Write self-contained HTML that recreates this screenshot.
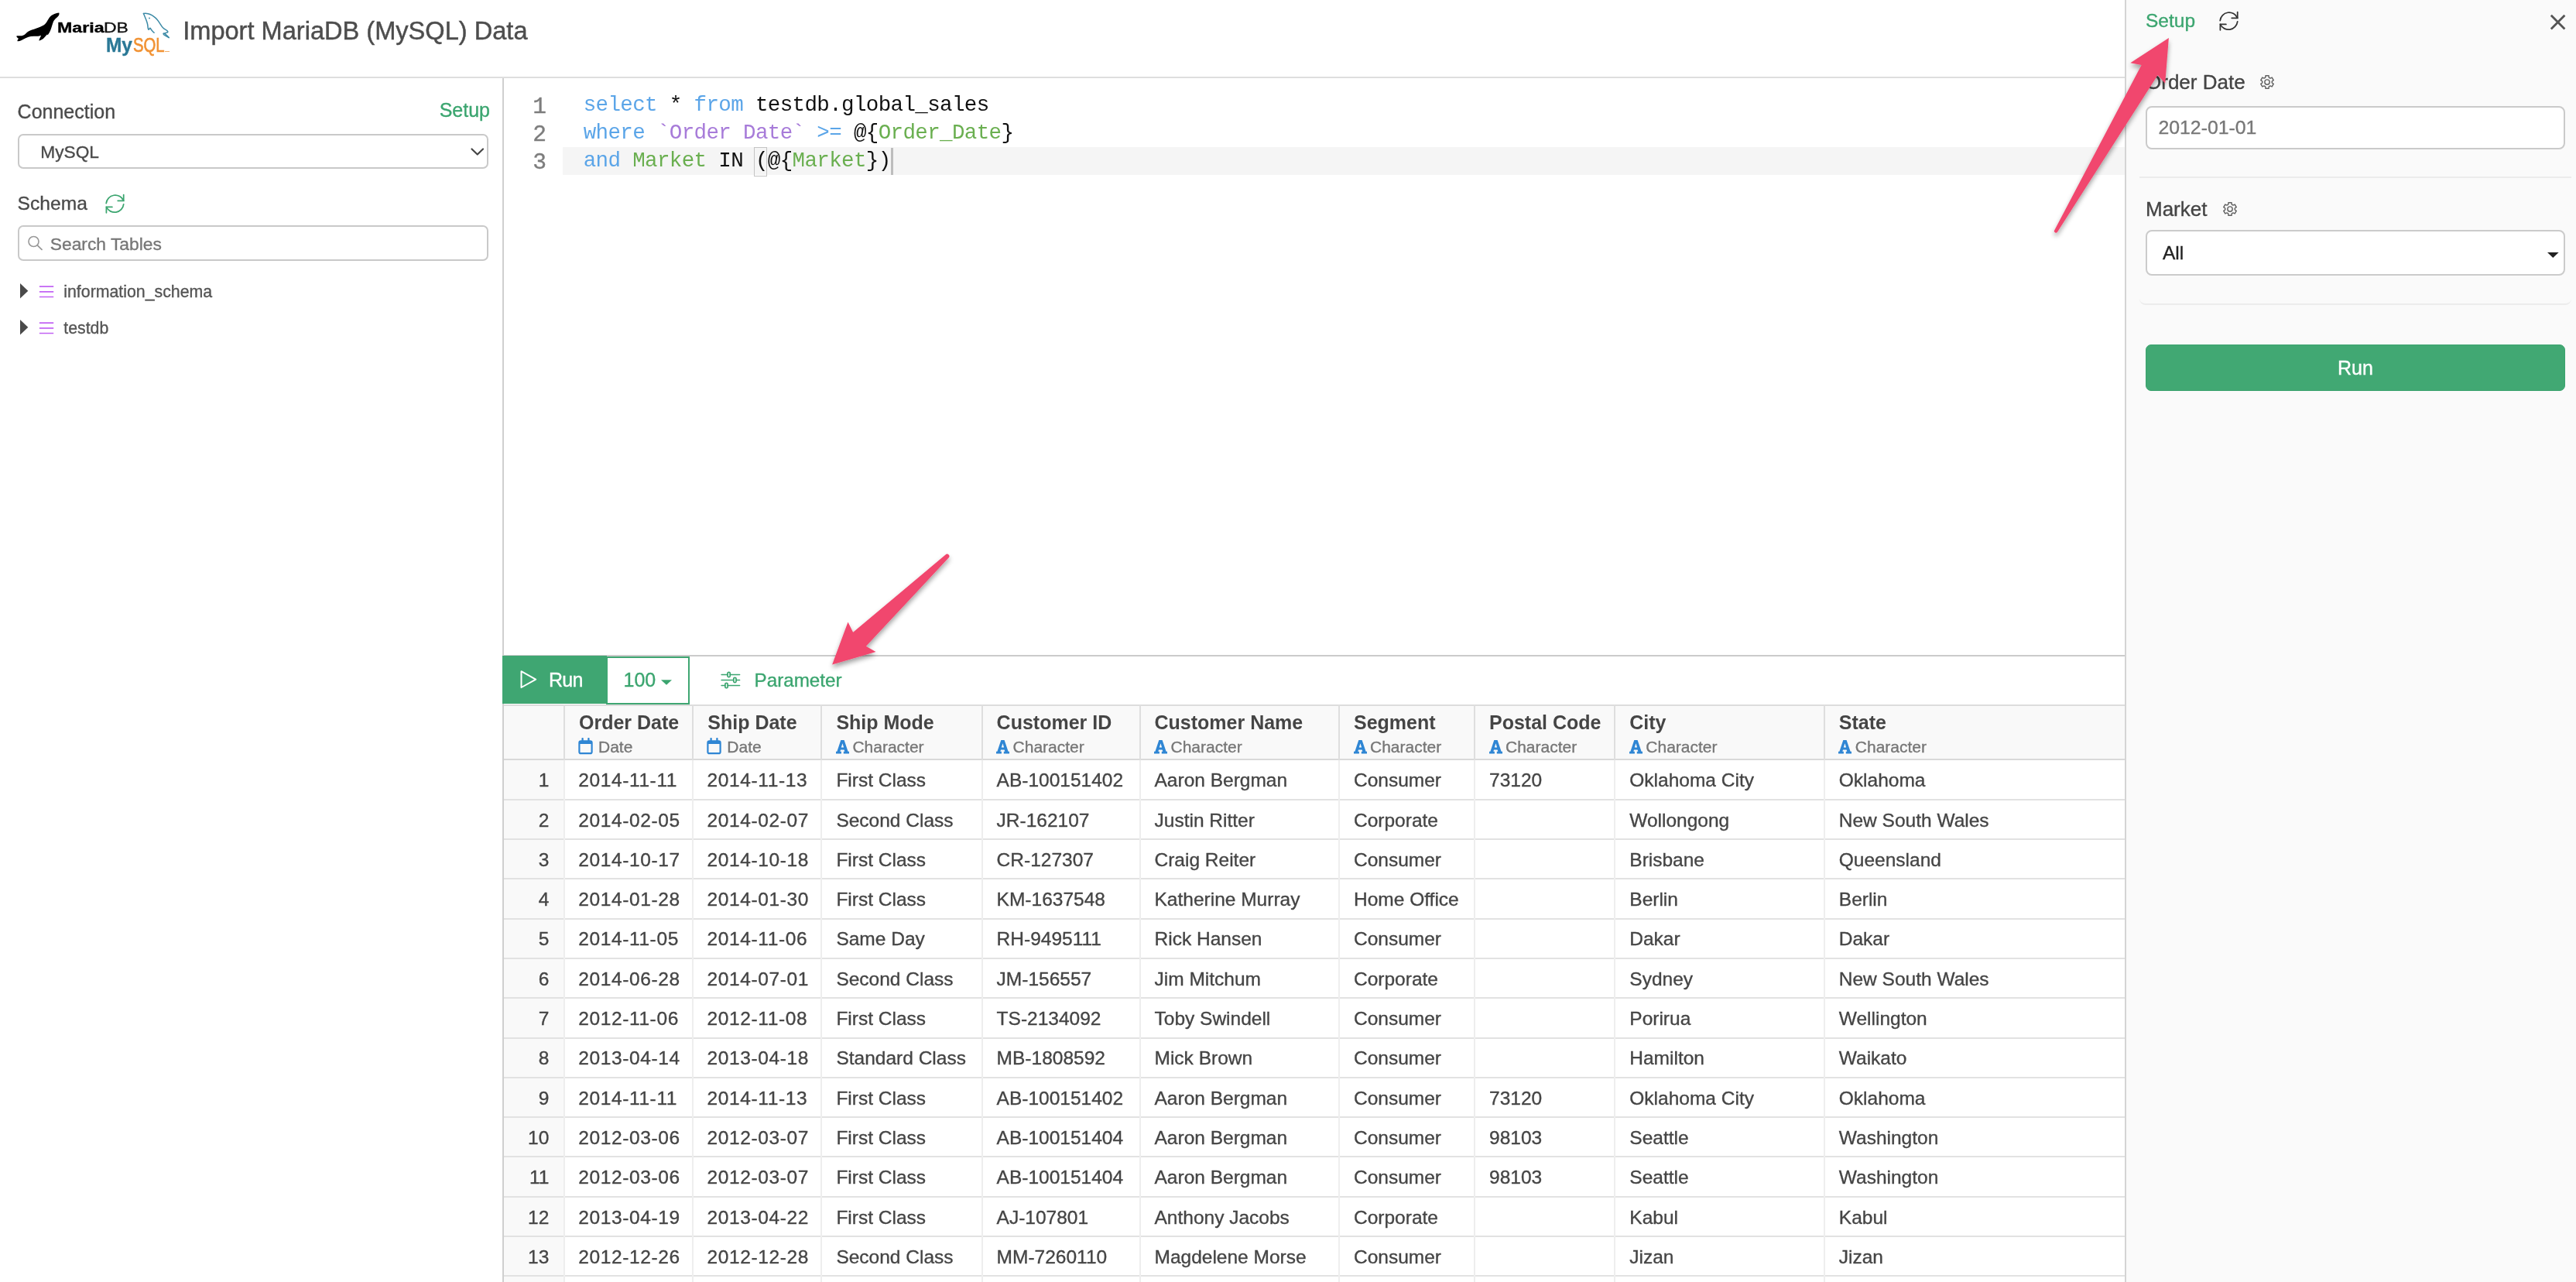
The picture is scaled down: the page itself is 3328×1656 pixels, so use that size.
<!DOCTYPE html>
<html><head><meta charset="utf-8"><title>Import MariaDB (MySQL) Data</title>
<style>
html,body{margin:0;padding:0;}
body{width:3328px;height:1656px;overflow:hidden;background:#fff;position:relative;font-family:"Liberation Sans",sans-serif;}
.t{position:absolute;white-space:pre;-webkit-text-stroke:0.35px currentColor;}
.abs{position:absolute;}
.box{position:absolute;box-sizing:border-box;}
</style></head><body><div class="abs" style="left:0;top:0;width:3328px;height:1656px;will-change:transform">

<div class="abs" style="left:0;top:99px;width:2745px;height:2px;background:#dedede"></div>
<div class="abs" style="left:649px;top:101px;width:2px;height:1555px;background:#cfcfcf"></div>
<svg class="abs" style="left:0;top:0" width="240" height="90" viewBox="0 0 240 90"><path d="M76.43 16.96 Q76.25 16.43 76.25 16.43 Q76.25 16.43 74.38 16.79 Q72.50 17.14 70.27 17.99 Q68.04 18.84 66.47 19.96 Q64.91 21.07 63.79 22.63 Q62.68 24.20 61.56 26.21 Q60.45 28.21 59.33 29.78 Q58.21 31.34 56.43 32.46 Q54.64 33.57 51.96 34.69 Q49.29 35.80 46.61 36.70 Q43.93 37.59 41.25 38.48 Q38.57 39.38 36.79 40.49 Q35.00 41.61 33.21 43.39 Q31.43 45.18 29.64 45.85 Q27.86 46.52 25.62 46.29 Q23.39 46.07 22.05 46.29 Q20.71 46.52 21.61 47.63 Q22.50 48.75 23.39 49.20 Q24.29 49.64 22.95 51.43 Q21.61 53.21 23.39 53.21 Q25.18 53.21 27.86 51.88 Q30.54 50.54 33.66 48.97 Q36.79 47.41 39.91 46.96 Q43.04 46.52 45.71 46.74 Q48.39 46.96 50.62 46.52 Q52.86 46.07 53.30 45.40 Q53.75 44.73 51.74 48.75 Q49.73 52.77 50.85 52.54 Q51.96 52.32 54.20 50.98 Q56.43 49.64 58.21 47.41 Q60.00 45.18 60.67 44.73 Q61.34 44.29 61.47 44.96 Q61.61 45.62 62.59 44.06 Q63.57 42.50 64.46 40.71 Q65.36 38.93 66.25 36.25 Q67.14 33.57 67.81 31.34 Q68.48 29.11 69.15 27.54 Q69.82 25.98 71.16 24.64 Q72.50 23.30 73.62 22.41 Q74.73 21.52 75.49 20.40 Q76.25 19.29 76.43 18.39 Q76.61 17.50 76.43 16.96 Z" fill="#000"/><g fill="none" stroke="#3c8aa6" stroke-width="1.5" stroke-linecap="round" stroke-linejoin="round"><path d="M185.45 17.50 Q188.57 17.05 191.25 17.72 Q193.93 18.39 196.16 19.73 Q198.39 21.07 200.62 22.86 Q202.86 24.64 204.64 27.32 Q206.43 30.00 207.77 32.23 Q209.11 34.46 210.45 35.80 Q211.79 37.14 214.02 38.48 Q216.25 39.82 216.70 40.71 Q217.14 41.61 215.80 41.96 Q214.46 42.32 213.48 42.77 Q212.50 43.21 213.93 44.29 Q215.36 45.36 216.79 46.96 L218.21 48.57"/><path d="M185.45 17.50 Q187.68 22.86 188.57 25.09 Q189.46 27.32 190.13 29.55 Q190.80 31.79 190.94 34.02 Q191.07 36.25 191.61 37.68 Q192.14 39.11 192.95 37.23 Q193.75 35.36 194.51 36.79 Q195.27 38.21 196.38 39.46 Q197.50 40.71 198.30 41.52 L199.11 42.32"/><path d="M218.21 48.57 Q214.46 46.52 212.90 45.62 Q211.34 44.73 211.12 43.84 Q210.89 42.95 211.70 43.08 L212.50 43.21"/></g><circle cx="193" cy="23.5" r="0.9" fill="#3c8aa6"/></svg><div class="t" style="left:73.6px;top:25.8px;font-size:18px;line-height:20px;color:#000;font-weight:bold;transform-origin:0 0;transform:scaleX(1.29)">Maria</div><div class="t" style="left:134.2px;top:25.8px;font-size:18px;line-height:20px;color:#111;transform-origin:0 0;transform:scaleX(1.27)">DB</div><div class="t" style="left:137.3px;top:43.6px;font-size:26px;line-height:28px;color:#2a7896;font-weight:bold;transform-origin:0 0;transform:scaleX(0.94)">My</div><div class="t" style="left:172.3px;top:43.6px;font-size:26px;line-height:28px;color:#f19233;-webkit-text-stroke:0.7px #f19233;transform-origin:0 0;transform:scaleX(0.78)">SQL</div><div class="abs" style="left:212.5px;top:65.5px;width:6px;height:1.5px;background:#f4b06a"></div>
<div class="t" style="left:236.20px;top:24.40px;font-size:32.60px;line-height:32.60px;color:#4d4d4d;font-weight:normal;-webkit-text-stroke:0.45px #4d4d4d;">Import MariaDB (MySQL) Data</div>
<div class="t" style="left:22.60px;top:132.04px;font-size:25.00px;line-height:25.00px;color:#4a4a4a;font-weight:normal;">Connection</div>
<div class="t" style="right:2695.00px;top:130.24px;font-size:25.00px;line-height:25.00px;color:#3ba56f;font-weight:normal;">Setup</div>
<div class="box" style="left:23px;top:173px;width:608px;height:45px;border:2px solid #c9c9c9;border-radius:7px;background:#fff"></div>
<div class="t" style="left:52.30px;top:185.38px;font-size:22.70px;line-height:22.70px;color:#4a4a4a;font-weight:normal;">MySQL</div>
<svg class="abs" style="left:606px;top:188px" width="22" height="16" viewBox="0 0 22 16"><path d="M3.5 4.5 L10.8 11.5 L18 4.5" fill="none" stroke="#444" stroke-width="2.2" stroke-linecap="round" stroke-linejoin="round"/></svg>
<div class="t" style="left:22.60px;top:251.18px;font-size:24.60px;line-height:24.60px;color:#4a4a4a;font-weight:normal;">Schema</div>
<svg class="abs" style="left:135.00px;top:250.00px" width="28" height="28" viewBox="0 0 28 28"><g fill="none" stroke="#3ba56f" stroke-width="1.75" stroke-linecap="round" stroke-linejoin="miter"><path d="M2.2 12.7 A11.7 11.7 0 0 1 24.6 9.2"/><path d="M24.7 1.6 V9.3 H17.2"/><path d="M24.7 13.9 A11.7 11.7 0 0 1 2.5 17.5"/><path d="M2.4 24.8 V17.4 H9.9"/></g></svg>
<div class="box" style="left:23px;top:291px;width:608px;height:46px;border:2px solid #c9c9c9;border-radius:7px;background:#fff"></div>
<svg class="abs" style="left:34px;top:303px" width="24" height="22" viewBox="0 0 24 22"><circle cx="9.5" cy="9" r="6.5" fill="none" stroke="#999" stroke-width="1.6"/><path d="M14.3 13.8 L20 19.3" stroke="#999" stroke-width="1.8" stroke-linecap="round"/></svg>
<div class="t" style="left:64.80px;top:303.60px;font-size:22.80px;line-height:22.80px;color:#777;font-weight:normal;">Search Tables</div>
<svg class="abs" style="left:25px;top:365.3px" width="14" height="22" viewBox="0 0 14 22"><path d="M1 1 L11.3 10.8 L1 20.6 Z" fill="#4a4a4a"/></svg>
<svg class="abs" style="left:50px;top:366.3px" width="21" height="22" viewBox="0 0 21 22"><path d="M0.9 4.1 H19.2 M0.9 10.9 H19.2 M0.9 17.5 H19.2" stroke="#c264f4" stroke-width="1.6" fill="none"/></svg>
<div class="t" style="left:82.30px;top:366.77px;font-size:21.30px;line-height:21.30px;color:#555;font-weight:normal;">information_schema</div>
<svg class="abs" style="left:25px;top:412.3px" width="14" height="22" viewBox="0 0 14 22"><path d="M1 1 L11.3 10.8 L1 20.6 Z" fill="#4a4a4a"/></svg>
<svg class="abs" style="left:50px;top:413.3px" width="21" height="22" viewBox="0 0 21 22"><path d="M0.9 4.1 H19.2 M0.9 10.9 H19.2 M0.9 17.5 H19.2" stroke="#c264f4" stroke-width="1.6" fill="none"/></svg>
<div class="t" style="left:82.30px;top:413.77px;font-size:21.30px;line-height:21.30px;color:#555;font-weight:normal;">testdb</div>
<div class="abs" style="left:727px;top:190px;width:2018px;height:36px;background:#f5f5f5"></div>
<div class="t" style="left:753.70px;top:117.57px;font-family:'Liberation Mono', monospace;font-size:27.5px;letter-spacing:-0.63px;line-height:36px;-webkit-text-stroke:0;color:#000"><span style="color:#5ba5e8">select</span><span style="color:#111"> * </span><span style="color:#5ba5e8">from</span><span style="color:#111"> testdb.global_sales</span></div>
<div class="t" style="left:753.70px;top:153.57px;font-family:'Liberation Mono', monospace;font-size:27.5px;letter-spacing:-0.63px;line-height:36px;-webkit-text-stroke:0;color:#000"><span style="color:#5ba5e8">where</span><span style="color:#111"> </span><span style="color:#a77bd9">`Order Date`</span><span style="color:#111"> </span><span style="color:#5ba5e8">&gt;=</span><span style="color:#111"> @{</span><span style="color:#6aaf50">Order_Date</span><span style="color:#111">}</span></div>
<div class="t" style="left:753.70px;top:189.57px;font-family:'Liberation Mono', monospace;font-size:27.5px;letter-spacing:-0.63px;line-height:36px;-webkit-text-stroke:0;color:#000"><span style="color:#5ba5e8">and</span><span style="color:#111"> </span><span style="color:#6aaf50">Market</span><span style="color:#111"> IN (@{</span><span style="color:#6aaf50">Market</span><span style="color:#111">})</span></div>
<div class="t" style="left:688.2px;top:119.91px;font-family:'Liberation Mono', monospace;font-size:29.6px;line-height:36px;color:#7d7d7d">1</div>
<div class="t" style="left:688.2px;top:155.91px;font-family:'Liberation Mono', monospace;font-size:29.6px;line-height:36px;color:#7d7d7d">2</div>
<div class="t" style="left:688.2px;top:191.91px;font-family:'Liberation Mono', monospace;font-size:29.6px;line-height:36px;color:#7d7d7d">3</div>
<div class="box" style="left:974px;top:189.5px;width:16.5px;height:38.5px;border:1.5px solid #c4c4c4"></div>
<div class="abs" style="left:1151px;top:191px;width:3px;height:35px;background:#bdbdbd"></div>
<div class="abs" style="left:651px;top:846px;width:2094px;height:2px;background:#cbcbcb"></div>
<div class="abs" style="left:649px;top:847px;width:135px;height:62px;background:#3fa672"></div>
<svg class="abs" style="left:668px;top:862px" width="30" height="32" viewBox="0 0 30 32"><path d="M5.5 5.2 L24.2 15.6 L5.5 26 Z" fill="none" stroke="#fff" stroke-width="2" stroke-linejoin="round"/></svg>
<div class="t" style="left:709.00px;top:866.24px;font-size:25.00px;line-height:25.00px;color:#fff;font-weight:normal;letter-spacing:-0.7px;">Run</div>
<div class="box" style="left:783px;top:848px;width:108px;height:62px;border:2px solid #3fa672;background:#fff"></div>
<div class="t" style="left:805.50px;top:866.24px;font-size:25.00px;line-height:25.00px;color:#3ba56f;font-weight:normal;">100</div>
<svg class="abs" style="left:853px;top:877px" width="16" height="9" viewBox="0 0 16 9"><path d="M1 1.3 L15 1.3 L8 7.8 Z" fill="#3ba56f"/></svg>
<svg class="abs" style="left:930px;top:866px" width="28" height="26" viewBox="0 0 28 26"><g fill="none" stroke="#3ba56f" stroke-width="1.55" stroke-linecap="round"><path d="M2.1 5.5 H9.9 M13.3 5.5 H25.6 M2.1 12.4 H17.7 M21.1 12.4 H25.6 M2.1 19.5 H6.8 M10.2 19.5 H25.6"/><g stroke-width="1.7"><rect x="9.95" y="2.3" width="3.3" height="6.3" rx="1.5"/><rect x="17.75" y="9.3" width="3.3" height="6.3" rx="1.5"/><rect x="6.85" y="16.4" width="3.3" height="6.3" rx="1.5"/></g></g></svg>
<div class="t" style="left:974.60px;top:866.91px;font-size:24.20px;line-height:24.20px;color:#3ba56f;font-weight:normal;">Parameter</div>
<div class="abs" style="left:651px;top:910px;width:2094px;height:72px;background:#f9f9f9"></div>
<div class="abs" style="left:651px;top:982px;width:78px;height:674px;background:#f9f9f9"></div>
<div class="abs" style="left:651px;top:910px;width:2094px;height:2px;background:#dcdcdc"></div>
<div class="abs" style="left:651px;top:980px;width:2094px;height:2px;background:#d9d9d9"></div>
<div class="abs" style="left:651px;top:1032px;width:2094px;height:2px;background:#e2e2e2"></div>
<div class="abs" style="left:651px;top:1083px;width:2094px;height:2px;background:#e2e2e2"></div>
<div class="abs" style="left:651px;top:1134px;width:2094px;height:2px;background:#e2e2e2"></div>
<div class="abs" style="left:651px;top:1186px;width:2094px;height:2px;background:#e2e2e2"></div>
<div class="abs" style="left:651px;top:1237px;width:2094px;height:2px;background:#e2e2e2"></div>
<div class="abs" style="left:651px;top:1288px;width:2094px;height:2px;background:#e2e2e2"></div>
<div class="abs" style="left:651px;top:1340px;width:2094px;height:2px;background:#e2e2e2"></div>
<div class="abs" style="left:651px;top:1391px;width:2094px;height:2px;background:#e2e2e2"></div>
<div class="abs" style="left:651px;top:1442px;width:2094px;height:2px;background:#e2e2e2"></div>
<div class="abs" style="left:651px;top:1493px;width:2094px;height:2px;background:#e2e2e2"></div>
<div class="abs" style="left:651px;top:1545px;width:2094px;height:2px;background:#e2e2e2"></div>
<div class="abs" style="left:651px;top:1596px;width:2094px;height:2px;background:#e2e2e2"></div>
<div class="abs" style="left:651px;top:1647px;width:2094px;height:2px;background:#e2e2e2"></div>
<div class="abs" style="left:728px;top:910px;width:2px;height:72px;background:#dedede"></div>
<div class="abs" style="left:728px;top:982px;width:2px;height:674px;background:#eeeeee"></div>
<div class="abs" style="left:894px;top:910px;width:2px;height:72px;background:#dedede"></div>
<div class="abs" style="left:894px;top:982px;width:2px;height:674px;background:#eeeeee"></div>
<div class="abs" style="left:1060px;top:910px;width:2px;height:72px;background:#dedede"></div>
<div class="abs" style="left:1060px;top:982px;width:2px;height:674px;background:#eeeeee"></div>
<div class="abs" style="left:1268px;top:910px;width:2px;height:72px;background:#dedede"></div>
<div class="abs" style="left:1268px;top:982px;width:2px;height:674px;background:#eeeeee"></div>
<div class="abs" style="left:1472px;top:910px;width:2px;height:72px;background:#dedede"></div>
<div class="abs" style="left:1472px;top:982px;width:2px;height:674px;background:#eeeeee"></div>
<div class="abs" style="left:1729px;top:910px;width:2px;height:72px;background:#dedede"></div>
<div class="abs" style="left:1729px;top:982px;width:2px;height:674px;background:#eeeeee"></div>
<div class="abs" style="left:1904px;top:910px;width:2px;height:72px;background:#dedede"></div>
<div class="abs" style="left:1904px;top:982px;width:2px;height:674px;background:#eeeeee"></div>
<div class="abs" style="left:2085px;top:910px;width:2px;height:72px;background:#dedede"></div>
<div class="abs" style="left:2085px;top:982px;width:2px;height:674px;background:#eeeeee"></div>
<div class="abs" style="left:2356px;top:910px;width:2px;height:72px;background:#dedede"></div>
<div class="abs" style="left:2356px;top:982px;width:2px;height:674px;background:#eeeeee"></div>
<div class="t" style="left:748.00px;top:921.44px;font-size:25.00px;line-height:25.00px;color:#454545;font-weight:bold;-webkit-text-stroke:0;">Order Date</div>
<svg class="abs" style="left:746.5px;top:952.8px" width="21" height="23" viewBox="0 0 21 23"><rect x="1.4" y="4.4" width="16.2" height="15.8" rx="2" fill="none" stroke="#2f86d4" stroke-width="2.2"/><rect x="1.4" y="4.4" width="16.2" height="3.6" fill="#2f86d4"/><path d="M5.6 1.1 V5.5 M13.4 1.1 V5.5" stroke="#2f86d4" stroke-width="2.3" stroke-linecap="round"/></svg>
<div class="t" style="left:773.00px;top:954.22px;font-size:21.00px;line-height:21.00px;color:#777;font-weight:normal;">Date</div>
<div class="t" style="left:914.30px;top:921.44px;font-size:25.00px;line-height:25.00px;color:#454545;font-weight:bold;-webkit-text-stroke:0;">Ship Date</div>
<svg class="abs" style="left:912.8px;top:952.8px" width="21" height="23" viewBox="0 0 21 23"><rect x="1.4" y="4.4" width="16.2" height="15.8" rx="2" fill="none" stroke="#2f86d4" stroke-width="2.2"/><rect x="1.4" y="4.4" width="16.2" height="3.6" fill="#2f86d4"/><path d="M5.6 1.1 V5.5 M13.4 1.1 V5.5" stroke="#2f86d4" stroke-width="2.3" stroke-linecap="round"/></svg>
<div class="t" style="left:939.30px;top:954.22px;font-size:21.00px;line-height:21.00px;color:#777;font-weight:normal;">Date</div>
<div class="t" style="left:1080.40px;top:921.44px;font-size:25.00px;line-height:25.00px;color:#454545;font-weight:bold;-webkit-text-stroke:0;">Ship Mode</div>
<svg class="abs" style="left:1078.9px;top:955.5px" width="19" height="19" viewBox="0 0 19 19"><path d="M7.3 0 L11.6 0 L16.6 14.7 L18 14.7 L18 17.6 L10.8 17.6 L10.8 14.7 L12.3 14.7 L11.6 12.4 L7.0 12.4 L6.3 14.7 L7.9 14.7 L7.9 17.6 L1 17.6 L1 14.7 L2.4 14.7 Z M9.45 4.3 L7.8 9.4 L11.1 9.4 Z" fill="#2f86d4" fill-rule="evenodd"/></svg>
<div class="t" style="left:1101.40px;top:954.22px;font-size:21.00px;line-height:21.00px;color:#777;font-weight:normal;">Character</div>
<div class="t" style="left:1287.60px;top:921.44px;font-size:25.00px;line-height:25.00px;color:#454545;font-weight:bold;-webkit-text-stroke:0;">Customer ID</div>
<svg class="abs" style="left:1286.1px;top:955.5px" width="19" height="19" viewBox="0 0 19 19"><path d="M7.3 0 L11.6 0 L16.6 14.7 L18 14.7 L18 17.6 L10.8 17.6 L10.8 14.7 L12.3 14.7 L11.6 12.4 L7.0 12.4 L6.3 14.7 L7.9 14.7 L7.9 17.6 L1 17.6 L1 14.7 L2.4 14.7 Z M9.45 4.3 L7.8 9.4 L11.1 9.4 Z" fill="#2f86d4" fill-rule="evenodd"/></svg>
<div class="t" style="left:1308.60px;top:954.22px;font-size:21.00px;line-height:21.00px;color:#777;font-weight:normal;">Character</div>
<div class="t" style="left:1491.50px;top:921.44px;font-size:25.00px;line-height:25.00px;color:#454545;font-weight:bold;-webkit-text-stroke:0;">Customer Name</div>
<svg class="abs" style="left:1490.0px;top:955.5px" width="19" height="19" viewBox="0 0 19 19"><path d="M7.3 0 L11.6 0 L16.6 14.7 L18 14.7 L18 17.6 L10.8 17.6 L10.8 14.7 L12.3 14.7 L11.6 12.4 L7.0 12.4 L6.3 14.7 L7.9 14.7 L7.9 17.6 L1 17.6 L1 14.7 L2.4 14.7 Z M9.45 4.3 L7.8 9.4 L11.1 9.4 Z" fill="#2f86d4" fill-rule="evenodd"/></svg>
<div class="t" style="left:1512.50px;top:954.22px;font-size:21.00px;line-height:21.00px;color:#777;font-weight:normal;">Character</div>
<div class="t" style="left:1749.00px;top:921.44px;font-size:25.00px;line-height:25.00px;color:#454545;font-weight:bold;-webkit-text-stroke:0;">Segment</div>
<svg class="abs" style="left:1747.5px;top:955.5px" width="19" height="19" viewBox="0 0 19 19"><path d="M7.3 0 L11.6 0 L16.6 14.7 L18 14.7 L18 17.6 L10.8 17.6 L10.8 14.7 L12.3 14.7 L11.6 12.4 L7.0 12.4 L6.3 14.7 L7.9 14.7 L7.9 17.6 L1 17.6 L1 14.7 L2.4 14.7 Z M9.45 4.3 L7.8 9.4 L11.1 9.4 Z" fill="#2f86d4" fill-rule="evenodd"/></svg>
<div class="t" style="left:1770.00px;top:954.22px;font-size:21.00px;line-height:21.00px;color:#777;font-weight:normal;">Character</div>
<div class="t" style="left:1924.00px;top:921.44px;font-size:25.00px;line-height:25.00px;color:#454545;font-weight:bold;-webkit-text-stroke:0;">Postal Code</div>
<svg class="abs" style="left:1922.5px;top:955.5px" width="19" height="19" viewBox="0 0 19 19"><path d="M7.3 0 L11.6 0 L16.6 14.7 L18 14.7 L18 17.6 L10.8 17.6 L10.8 14.7 L12.3 14.7 L11.6 12.4 L7.0 12.4 L6.3 14.7 L7.9 14.7 L7.9 17.6 L1 17.6 L1 14.7 L2.4 14.7 Z M9.45 4.3 L7.8 9.4 L11.1 9.4 Z" fill="#2f86d4" fill-rule="evenodd"/></svg>
<div class="t" style="left:1945.00px;top:954.22px;font-size:21.00px;line-height:21.00px;color:#777;font-weight:normal;">Character</div>
<div class="t" style="left:2105.30px;top:921.44px;font-size:25.00px;line-height:25.00px;color:#454545;font-weight:bold;-webkit-text-stroke:0;">City</div>
<svg class="abs" style="left:2103.8px;top:955.5px" width="19" height="19" viewBox="0 0 19 19"><path d="M7.3 0 L11.6 0 L16.6 14.7 L18 14.7 L18 17.6 L10.8 17.6 L10.8 14.7 L12.3 14.7 L11.6 12.4 L7.0 12.4 L6.3 14.7 L7.9 14.7 L7.9 17.6 L1 17.6 L1 14.7 L2.4 14.7 Z M9.45 4.3 L7.8 9.4 L11.1 9.4 Z" fill="#2f86d4" fill-rule="evenodd"/></svg>
<div class="t" style="left:2126.30px;top:954.22px;font-size:21.00px;line-height:21.00px;color:#777;font-weight:normal;">Character</div>
<div class="t" style="left:2375.80px;top:921.44px;font-size:25.00px;line-height:25.00px;color:#454545;font-weight:bold;-webkit-text-stroke:0;">State</div>
<svg class="abs" style="left:2374.3px;top:955.5px" width="19" height="19" viewBox="0 0 19 19"><path d="M7.3 0 L11.6 0 L16.6 14.7 L18 14.7 L18 17.6 L10.8 17.6 L10.8 14.7 L12.3 14.7 L11.6 12.4 L7.0 12.4 L6.3 14.7 L7.9 14.7 L7.9 17.6 L1 17.6 L1 14.7 L2.4 14.7 Z M9.45 4.3 L7.8 9.4 L11.1 9.4 Z" fill="#2f86d4" fill-rule="evenodd"/></svg>
<div class="t" style="left:2396.80px;top:954.22px;font-size:21.00px;line-height:21.00px;color:#777;font-weight:normal;">Character</div>
<div class="t" style="right:2618.70px;top:996.26px;font-size:24.50px;line-height:24.50px;color:#454545;font-weight:normal;">1</div>
<div class="t" style="left:747.20px;top:996.26px;font-size:24.50px;line-height:24.50px;color:#454545;font-weight:normal;letter-spacing:0.62px;">2014-11-11</div>
<div class="t" style="left:913.50px;top:996.26px;font-size:24.50px;line-height:24.50px;color:#454545;font-weight:normal;letter-spacing:0.62px;">2014-11-13</div>
<div class="t" style="left:1080.40px;top:996.26px;font-size:24.50px;line-height:24.50px;color:#454545;font-weight:normal;">First Class</div>
<div class="t" style="left:1287.60px;top:996.26px;font-size:24.50px;line-height:24.50px;color:#454545;font-weight:normal;">AB-100151402</div>
<div class="t" style="left:1491.50px;top:996.26px;font-size:24.50px;line-height:24.50px;color:#454545;font-weight:normal;">Aaron Bergman</div>
<div class="t" style="left:1749.00px;top:996.26px;font-size:24.50px;line-height:24.50px;color:#454545;font-weight:normal;">Consumer</div>
<div class="t" style="left:1924.00px;top:996.26px;font-size:24.50px;line-height:24.50px;color:#454545;font-weight:normal;">73120</div>
<div class="t" style="left:2105.30px;top:996.26px;font-size:24.50px;line-height:24.50px;color:#454545;font-weight:normal;">Oklahoma City</div>
<div class="t" style="left:2375.80px;top:996.26px;font-size:24.50px;line-height:24.50px;color:#454545;font-weight:normal;">Oklahoma</div>
<div class="t" style="right:2618.70px;top:1047.56px;font-size:24.50px;line-height:24.50px;color:#454545;font-weight:normal;">2</div>
<div class="t" style="left:747.20px;top:1047.56px;font-size:24.50px;line-height:24.50px;color:#454545;font-weight:normal;letter-spacing:0.62px;">2014-02-05</div>
<div class="t" style="left:913.50px;top:1047.56px;font-size:24.50px;line-height:24.50px;color:#454545;font-weight:normal;letter-spacing:0.62px;">2014-02-07</div>
<div class="t" style="left:1080.40px;top:1047.56px;font-size:24.50px;line-height:24.50px;color:#454545;font-weight:normal;">Second Class</div>
<div class="t" style="left:1287.60px;top:1047.56px;font-size:24.50px;line-height:24.50px;color:#454545;font-weight:normal;">JR-162107</div>
<div class="t" style="left:1491.50px;top:1047.56px;font-size:24.50px;line-height:24.50px;color:#454545;font-weight:normal;">Justin Ritter</div>
<div class="t" style="left:1749.00px;top:1047.56px;font-size:24.50px;line-height:24.50px;color:#454545;font-weight:normal;">Corporate</div>
<div class="t" style="left:2105.30px;top:1047.56px;font-size:24.50px;line-height:24.50px;color:#454545;font-weight:normal;">Wollongong</div>
<div class="t" style="left:2375.80px;top:1047.56px;font-size:24.50px;line-height:24.50px;color:#454545;font-weight:normal;">New South Wales</div>
<div class="t" style="right:2618.70px;top:1098.86px;font-size:24.50px;line-height:24.50px;color:#454545;font-weight:normal;">3</div>
<div class="t" style="left:747.20px;top:1098.86px;font-size:24.50px;line-height:24.50px;color:#454545;font-weight:normal;letter-spacing:0.62px;">2014-10-17</div>
<div class="t" style="left:913.50px;top:1098.86px;font-size:24.50px;line-height:24.50px;color:#454545;font-weight:normal;letter-spacing:0.62px;">2014-10-18</div>
<div class="t" style="left:1080.40px;top:1098.86px;font-size:24.50px;line-height:24.50px;color:#454545;font-weight:normal;">First Class</div>
<div class="t" style="left:1287.60px;top:1098.86px;font-size:24.50px;line-height:24.50px;color:#454545;font-weight:normal;">CR-127307</div>
<div class="t" style="left:1491.50px;top:1098.86px;font-size:24.50px;line-height:24.50px;color:#454545;font-weight:normal;">Craig Reiter</div>
<div class="t" style="left:1749.00px;top:1098.86px;font-size:24.50px;line-height:24.50px;color:#454545;font-weight:normal;">Consumer</div>
<div class="t" style="left:2105.30px;top:1098.86px;font-size:24.50px;line-height:24.50px;color:#454545;font-weight:normal;">Brisbane</div>
<div class="t" style="left:2375.80px;top:1098.86px;font-size:24.50px;line-height:24.50px;color:#454545;font-weight:normal;">Queensland</div>
<div class="t" style="right:2618.70px;top:1150.16px;font-size:24.50px;line-height:24.50px;color:#454545;font-weight:normal;">4</div>
<div class="t" style="left:747.20px;top:1150.16px;font-size:24.50px;line-height:24.50px;color:#454545;font-weight:normal;letter-spacing:0.62px;">2014-01-28</div>
<div class="t" style="left:913.50px;top:1150.16px;font-size:24.50px;line-height:24.50px;color:#454545;font-weight:normal;letter-spacing:0.62px;">2014-01-30</div>
<div class="t" style="left:1080.40px;top:1150.16px;font-size:24.50px;line-height:24.50px;color:#454545;font-weight:normal;">First Class</div>
<div class="t" style="left:1287.60px;top:1150.16px;font-size:24.50px;line-height:24.50px;color:#454545;font-weight:normal;">KM-1637548</div>
<div class="t" style="left:1491.50px;top:1150.16px;font-size:24.50px;line-height:24.50px;color:#454545;font-weight:normal;">Katherine Murray</div>
<div class="t" style="left:1749.00px;top:1150.16px;font-size:24.50px;line-height:24.50px;color:#454545;font-weight:normal;">Home Office</div>
<div class="t" style="left:2105.30px;top:1150.16px;font-size:24.50px;line-height:24.50px;color:#454545;font-weight:normal;">Berlin</div>
<div class="t" style="left:2375.80px;top:1150.16px;font-size:24.50px;line-height:24.50px;color:#454545;font-weight:normal;">Berlin</div>
<div class="t" style="right:2618.70px;top:1201.46px;font-size:24.50px;line-height:24.50px;color:#454545;font-weight:normal;">5</div>
<div class="t" style="left:747.20px;top:1201.46px;font-size:24.50px;line-height:24.50px;color:#454545;font-weight:normal;letter-spacing:0.62px;">2014-11-05</div>
<div class="t" style="left:913.50px;top:1201.46px;font-size:24.50px;line-height:24.50px;color:#454545;font-weight:normal;letter-spacing:0.62px;">2014-11-06</div>
<div class="t" style="left:1080.40px;top:1201.46px;font-size:24.50px;line-height:24.50px;color:#454545;font-weight:normal;">Same Day</div>
<div class="t" style="left:1287.60px;top:1201.46px;font-size:24.50px;line-height:24.50px;color:#454545;font-weight:normal;">RH-9495111</div>
<div class="t" style="left:1491.50px;top:1201.46px;font-size:24.50px;line-height:24.50px;color:#454545;font-weight:normal;">Rick Hansen</div>
<div class="t" style="left:1749.00px;top:1201.46px;font-size:24.50px;line-height:24.50px;color:#454545;font-weight:normal;">Consumer</div>
<div class="t" style="left:2105.30px;top:1201.46px;font-size:24.50px;line-height:24.50px;color:#454545;font-weight:normal;">Dakar</div>
<div class="t" style="left:2375.80px;top:1201.46px;font-size:24.50px;line-height:24.50px;color:#454545;font-weight:normal;">Dakar</div>
<div class="t" style="right:2618.70px;top:1252.76px;font-size:24.50px;line-height:24.50px;color:#454545;font-weight:normal;">6</div>
<div class="t" style="left:747.20px;top:1252.76px;font-size:24.50px;line-height:24.50px;color:#454545;font-weight:normal;letter-spacing:0.62px;">2014-06-28</div>
<div class="t" style="left:913.50px;top:1252.76px;font-size:24.50px;line-height:24.50px;color:#454545;font-weight:normal;letter-spacing:0.62px;">2014-07-01</div>
<div class="t" style="left:1080.40px;top:1252.76px;font-size:24.50px;line-height:24.50px;color:#454545;font-weight:normal;">Second Class</div>
<div class="t" style="left:1287.60px;top:1252.76px;font-size:24.50px;line-height:24.50px;color:#454545;font-weight:normal;">JM-156557</div>
<div class="t" style="left:1491.50px;top:1252.76px;font-size:24.50px;line-height:24.50px;color:#454545;font-weight:normal;">Jim Mitchum</div>
<div class="t" style="left:1749.00px;top:1252.76px;font-size:24.50px;line-height:24.50px;color:#454545;font-weight:normal;">Corporate</div>
<div class="t" style="left:2105.30px;top:1252.76px;font-size:24.50px;line-height:24.50px;color:#454545;font-weight:normal;">Sydney</div>
<div class="t" style="left:2375.80px;top:1252.76px;font-size:24.50px;line-height:24.50px;color:#454545;font-weight:normal;">New South Wales</div>
<div class="t" style="right:2618.70px;top:1304.06px;font-size:24.50px;line-height:24.50px;color:#454545;font-weight:normal;">7</div>
<div class="t" style="left:747.20px;top:1304.06px;font-size:24.50px;line-height:24.50px;color:#454545;font-weight:normal;letter-spacing:0.62px;">2012-11-06</div>
<div class="t" style="left:913.50px;top:1304.06px;font-size:24.50px;line-height:24.50px;color:#454545;font-weight:normal;letter-spacing:0.62px;">2012-11-08</div>
<div class="t" style="left:1080.40px;top:1304.06px;font-size:24.50px;line-height:24.50px;color:#454545;font-weight:normal;">First Class</div>
<div class="t" style="left:1287.60px;top:1304.06px;font-size:24.50px;line-height:24.50px;color:#454545;font-weight:normal;">TS-2134092</div>
<div class="t" style="left:1491.50px;top:1304.06px;font-size:24.50px;line-height:24.50px;color:#454545;font-weight:normal;">Toby Swindell</div>
<div class="t" style="left:1749.00px;top:1304.06px;font-size:24.50px;line-height:24.50px;color:#454545;font-weight:normal;">Consumer</div>
<div class="t" style="left:2105.30px;top:1304.06px;font-size:24.50px;line-height:24.50px;color:#454545;font-weight:normal;">Porirua</div>
<div class="t" style="left:2375.80px;top:1304.06px;font-size:24.50px;line-height:24.50px;color:#454545;font-weight:normal;">Wellington</div>
<div class="t" style="right:2618.70px;top:1355.36px;font-size:24.50px;line-height:24.50px;color:#454545;font-weight:normal;">8</div>
<div class="t" style="left:747.20px;top:1355.36px;font-size:24.50px;line-height:24.50px;color:#454545;font-weight:normal;letter-spacing:0.62px;">2013-04-14</div>
<div class="t" style="left:913.50px;top:1355.36px;font-size:24.50px;line-height:24.50px;color:#454545;font-weight:normal;letter-spacing:0.62px;">2013-04-18</div>
<div class="t" style="left:1080.40px;top:1355.36px;font-size:24.50px;line-height:24.50px;color:#454545;font-weight:normal;">Standard Class</div>
<div class="t" style="left:1287.60px;top:1355.36px;font-size:24.50px;line-height:24.50px;color:#454545;font-weight:normal;">MB-1808592</div>
<div class="t" style="left:1491.50px;top:1355.36px;font-size:24.50px;line-height:24.50px;color:#454545;font-weight:normal;">Mick Brown</div>
<div class="t" style="left:1749.00px;top:1355.36px;font-size:24.50px;line-height:24.50px;color:#454545;font-weight:normal;">Consumer</div>
<div class="t" style="left:2105.30px;top:1355.36px;font-size:24.50px;line-height:24.50px;color:#454545;font-weight:normal;">Hamilton</div>
<div class="t" style="left:2375.80px;top:1355.36px;font-size:24.50px;line-height:24.50px;color:#454545;font-weight:normal;">Waikato</div>
<div class="t" style="right:2618.70px;top:1406.66px;font-size:24.50px;line-height:24.50px;color:#454545;font-weight:normal;">9</div>
<div class="t" style="left:747.20px;top:1406.66px;font-size:24.50px;line-height:24.50px;color:#454545;font-weight:normal;letter-spacing:0.62px;">2014-11-11</div>
<div class="t" style="left:913.50px;top:1406.66px;font-size:24.50px;line-height:24.50px;color:#454545;font-weight:normal;letter-spacing:0.62px;">2014-11-13</div>
<div class="t" style="left:1080.40px;top:1406.66px;font-size:24.50px;line-height:24.50px;color:#454545;font-weight:normal;">First Class</div>
<div class="t" style="left:1287.60px;top:1406.66px;font-size:24.50px;line-height:24.50px;color:#454545;font-weight:normal;">AB-100151402</div>
<div class="t" style="left:1491.50px;top:1406.66px;font-size:24.50px;line-height:24.50px;color:#454545;font-weight:normal;">Aaron Bergman</div>
<div class="t" style="left:1749.00px;top:1406.66px;font-size:24.50px;line-height:24.50px;color:#454545;font-weight:normal;">Consumer</div>
<div class="t" style="left:1924.00px;top:1406.66px;font-size:24.50px;line-height:24.50px;color:#454545;font-weight:normal;">73120</div>
<div class="t" style="left:2105.30px;top:1406.66px;font-size:24.50px;line-height:24.50px;color:#454545;font-weight:normal;">Oklahoma City</div>
<div class="t" style="left:2375.80px;top:1406.66px;font-size:24.50px;line-height:24.50px;color:#454545;font-weight:normal;">Oklahoma</div>
<div class="t" style="right:2618.70px;top:1457.96px;font-size:24.50px;line-height:24.50px;color:#454545;font-weight:normal;">10</div>
<div class="t" style="left:747.20px;top:1457.96px;font-size:24.50px;line-height:24.50px;color:#454545;font-weight:normal;letter-spacing:0.62px;">2012-03-06</div>
<div class="t" style="left:913.50px;top:1457.96px;font-size:24.50px;line-height:24.50px;color:#454545;font-weight:normal;letter-spacing:0.62px;">2012-03-07</div>
<div class="t" style="left:1080.40px;top:1457.96px;font-size:24.50px;line-height:24.50px;color:#454545;font-weight:normal;">First Class</div>
<div class="t" style="left:1287.60px;top:1457.96px;font-size:24.50px;line-height:24.50px;color:#454545;font-weight:normal;">AB-100151404</div>
<div class="t" style="left:1491.50px;top:1457.96px;font-size:24.50px;line-height:24.50px;color:#454545;font-weight:normal;">Aaron Bergman</div>
<div class="t" style="left:1749.00px;top:1457.96px;font-size:24.50px;line-height:24.50px;color:#454545;font-weight:normal;">Consumer</div>
<div class="t" style="left:1924.00px;top:1457.96px;font-size:24.50px;line-height:24.50px;color:#454545;font-weight:normal;">98103</div>
<div class="t" style="left:2105.30px;top:1457.96px;font-size:24.50px;line-height:24.50px;color:#454545;font-weight:normal;">Seattle</div>
<div class="t" style="left:2375.80px;top:1457.96px;font-size:24.50px;line-height:24.50px;color:#454545;font-weight:normal;">Washington</div>
<div class="t" style="right:2618.70px;top:1509.26px;font-size:24.50px;line-height:24.50px;color:#454545;font-weight:normal;">11</div>
<div class="t" style="left:747.20px;top:1509.26px;font-size:24.50px;line-height:24.50px;color:#454545;font-weight:normal;letter-spacing:0.62px;">2012-03-06</div>
<div class="t" style="left:913.50px;top:1509.26px;font-size:24.50px;line-height:24.50px;color:#454545;font-weight:normal;letter-spacing:0.62px;">2012-03-07</div>
<div class="t" style="left:1080.40px;top:1509.26px;font-size:24.50px;line-height:24.50px;color:#454545;font-weight:normal;">First Class</div>
<div class="t" style="left:1287.60px;top:1509.26px;font-size:24.50px;line-height:24.50px;color:#454545;font-weight:normal;">AB-100151404</div>
<div class="t" style="left:1491.50px;top:1509.26px;font-size:24.50px;line-height:24.50px;color:#454545;font-weight:normal;">Aaron Bergman</div>
<div class="t" style="left:1749.00px;top:1509.26px;font-size:24.50px;line-height:24.50px;color:#454545;font-weight:normal;">Consumer</div>
<div class="t" style="left:1924.00px;top:1509.26px;font-size:24.50px;line-height:24.50px;color:#454545;font-weight:normal;">98103</div>
<div class="t" style="left:2105.30px;top:1509.26px;font-size:24.50px;line-height:24.50px;color:#454545;font-weight:normal;">Seattle</div>
<div class="t" style="left:2375.80px;top:1509.26px;font-size:24.50px;line-height:24.50px;color:#454545;font-weight:normal;">Washington</div>
<div class="t" style="right:2618.70px;top:1560.56px;font-size:24.50px;line-height:24.50px;color:#454545;font-weight:normal;">12</div>
<div class="t" style="left:747.20px;top:1560.56px;font-size:24.50px;line-height:24.50px;color:#454545;font-weight:normal;letter-spacing:0.62px;">2013-04-19</div>
<div class="t" style="left:913.50px;top:1560.56px;font-size:24.50px;line-height:24.50px;color:#454545;font-weight:normal;letter-spacing:0.62px;">2013-04-22</div>
<div class="t" style="left:1080.40px;top:1560.56px;font-size:24.50px;line-height:24.50px;color:#454545;font-weight:normal;">First Class</div>
<div class="t" style="left:1287.60px;top:1560.56px;font-size:24.50px;line-height:24.50px;color:#454545;font-weight:normal;">AJ-107801</div>
<div class="t" style="left:1491.50px;top:1560.56px;font-size:24.50px;line-height:24.50px;color:#454545;font-weight:normal;">Anthony Jacobs</div>
<div class="t" style="left:1749.00px;top:1560.56px;font-size:24.50px;line-height:24.50px;color:#454545;font-weight:normal;">Corporate</div>
<div class="t" style="left:2105.30px;top:1560.56px;font-size:24.50px;line-height:24.50px;color:#454545;font-weight:normal;">Kabul</div>
<div class="t" style="left:2375.80px;top:1560.56px;font-size:24.50px;line-height:24.50px;color:#454545;font-weight:normal;">Kabul</div>
<div class="t" style="right:2618.70px;top:1611.86px;font-size:24.50px;line-height:24.50px;color:#454545;font-weight:normal;">13</div>
<div class="t" style="left:747.20px;top:1611.86px;font-size:24.50px;line-height:24.50px;color:#454545;font-weight:normal;letter-spacing:0.62px;">2012-12-26</div>
<div class="t" style="left:913.50px;top:1611.86px;font-size:24.50px;line-height:24.50px;color:#454545;font-weight:normal;letter-spacing:0.62px;">2012-12-28</div>
<div class="t" style="left:1080.40px;top:1611.86px;font-size:24.50px;line-height:24.50px;color:#454545;font-weight:normal;">Second Class</div>
<div class="t" style="left:1287.60px;top:1611.86px;font-size:24.50px;line-height:24.50px;color:#454545;font-weight:normal;">MM-7260110</div>
<div class="t" style="left:1491.50px;top:1611.86px;font-size:24.50px;line-height:24.50px;color:#454545;font-weight:normal;">Magdelene Morse</div>
<div class="t" style="left:1749.00px;top:1611.86px;font-size:24.50px;line-height:24.50px;color:#454545;font-weight:normal;">Consumer</div>
<div class="t" style="left:2105.30px;top:1611.86px;font-size:24.50px;line-height:24.50px;color:#454545;font-weight:normal;">Jizan</div>
<div class="t" style="left:2375.80px;top:1611.86px;font-size:24.50px;line-height:24.50px;color:#454545;font-weight:normal;">Jizan</div>
<div class="abs" style="left:2746px;top:0;width:582px;height:1656px;background:#fafafa"></div>
<div class="abs" style="left:2745px;top:0;width:2px;height:1656px;background:#d4d4d4"></div>
<div class="t" style="left:2772.00px;top:14.66px;font-size:24.50px;line-height:24.50px;color:#3ba56f;font-weight:normal;">Setup</div>
<svg class="abs" style="left:2865.90px;top:14.00px" width="28" height="28" viewBox="0 0 28 28"><g fill="none" stroke="#333" stroke-width="1.75" stroke-linecap="round" stroke-linejoin="miter"><path d="M2.2 12.7 A11.7 11.7 0 0 1 24.6 9.2"/><path d="M24.7 1.6 V9.3 H17.2"/><path d="M24.7 13.9 A11.7 11.7 0 0 1 2.5 17.5"/><path d="M2.4 24.8 V17.4 H9.9"/></g></svg>
<svg class="abs" style="left:3292px;top:16px" width="26" height="26" viewBox="0 0 26 26"><path d="M3.8 3.8 L21.4 21.4 M21.4 3.8 L3.8 21.4" stroke="#555" stroke-width="2.8" stroke-linecap="butt"/></svg>
<div class="t" style="left:2772.00px;top:92.59px;font-size:26.00px;line-height:26.00px;color:#444;font-weight:normal;">Order Date</div>
<svg class="abs" style="left:2917.00px;top:94.30px" width="24" height="24" viewBox="0 0 24 24"><path d="M9.72 6.07 L10.00 3.69 L14.00 3.69 L14.28 6.07 L16.00 7.07 L18.20 6.11 L20.20 9.57 L18.27 11.01 L18.27 12.99 L20.20 14.43 L18.20 17.89 L16.00 16.93 L14.28 17.93 L14.00 20.31 L10.00 20.31 L9.72 17.93 L8.00 16.93 L5.80 17.89 L3.80 14.43 L5.73 12.99 L5.73 11.01 L3.80 9.57 L5.80 6.11 L8.00 7.07 Z" fill="none" stroke="#636363" stroke-width="1.5" stroke-linejoin="round"/><circle cx="12" cy="12" r="3.15" fill="none" stroke="#636363" stroke-width="1.45"/></svg>
<div class="box" style="left:2772px;top:137px;width:542px;height:56px;border:2px solid #cacaca;border-radius:8px;background:#fff"></div>
<div class="t" style="left:2788.50px;top:152.71px;font-size:24.80px;line-height:24.80px;color:#777;font-weight:normal;">2012-01-01</div>
<div class="abs" style="left:2764px;top:228px;width:558px;height:2px;background:#ececec"></div>
<div class="t" style="left:2772.00px;top:257.09px;font-size:26.00px;line-height:26.00px;color:#444;font-weight:normal;">Market</div>
<svg class="abs" style="left:2869.10px;top:257.90px" width="24" height="24" viewBox="0 0 24 24"><path d="M9.72 6.07 L10.00 3.69 L14.00 3.69 L14.28 6.07 L16.00 7.07 L18.20 6.11 L20.20 9.57 L18.27 11.01 L18.27 12.99 L20.20 14.43 L18.20 17.89 L16.00 16.93 L14.28 17.93 L14.00 20.31 L10.00 20.31 L9.72 17.93 L8.00 16.93 L5.80 17.89 L3.80 14.43 L5.73 12.99 L5.73 11.01 L3.80 9.57 L5.80 6.11 L8.00 7.07 Z" fill="none" stroke="#636363" stroke-width="1.5" stroke-linejoin="round"/><circle cx="12" cy="12" r="3.15" fill="none" stroke="#636363" stroke-width="1.45"/></svg>
<div class="box" style="left:2772px;top:297px;width:542px;height:59px;border:2px solid #cbcbcb;border-radius:8px;background:#fff"></div>
<div class="t" style="left:2794.00px;top:314.76px;font-size:24.50px;line-height:24.50px;color:#222;font-weight:normal;">All</div>
<svg class="abs" style="left:3290px;top:325px" width="17" height="9" viewBox="0 0 17 9"><path d="M1 1 L15.6 1 L8.3 8 Z" fill="#222"/></svg>
<div class="box" style="left:2764px;top:380px;width:558px;height:14px;border-bottom:2px solid #ececec;border-radius:0 0 8px 8px"></div>
<div class="box" style="left:2772px;top:445px;width:542px;height:60px;border-radius:7px;background:#41a873;border:1.5px solid #3ba36e"></div>
<div class="t" style="left:2772.00px;width:542.00px;text-align:center;top:462.84px;font-size:25.00px;line-height:25.00px;color:#fff;font-weight:normal;">Run</div>
<svg class="abs" style="left:0;top:0;pointer-events:none" width="3328" height="1656" viewBox="0 0 3328 1656">
<defs><filter id="sh" x="-20%" y="-20%" width="140%" height="140%"><feGaussianBlur in="SourceAlpha" stdDeviation="3"/><feOffset dx="0" dy="4" result="o"/><feComponentTransfer><feFuncA type="linear" slope="0.38"/></feComponentTransfer><feMerge><feMergeNode/><feMergeNode in="SourceGraphic"/></feMerge></filter></defs>
<g fill="#f1476e" filter="url(#sh)">
<path d="M2801.9 49 L2752.3 81.3 L2766.6 84.1 L2654.3 297.2 A2.1 2.1 0 0 0 2658 299.7 L2787.6 96.9 L2797.2 107.7 Z"/>
<path d="M1075.1 858.6 L1095.5 803.6 L1102.1 816.8 L1221.6 716.6 A2.8 2.8 0 0 1 1225.6 720.6 L1118.9 834.8 L1131.5 842.1 Z"/>
</g></svg>
</div></body></html>
